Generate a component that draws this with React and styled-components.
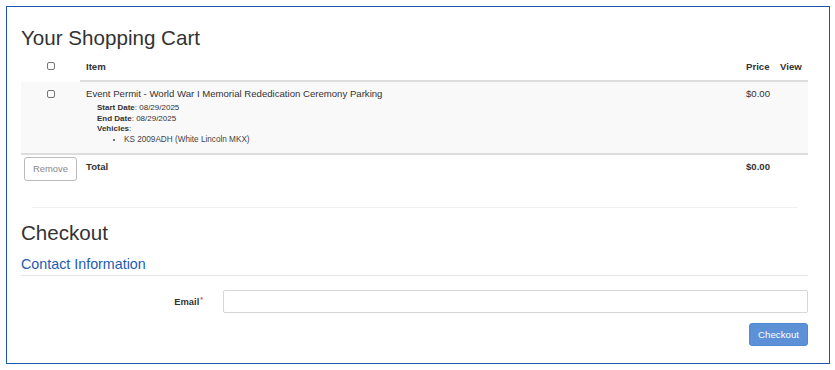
import React from 'react';
import styled, { createGlobalStyle } from 'styled-components';

const GlobalStyle = createGlobalStyle`
    html, body {
        margin: 0;
        padding: 0;
        background: #ffffff;
    }
    body {
        font-family: "Liberation Sans", Arial, sans-serif;
        color: #333333;
    }
`;

const Frame = styled.div`
    box-sizing: border-box;
    width: 824px;
    height: 358px;
    margin: 6px 0 0 6px;
    border: 1px solid #1d56b1;
    padding: 0 21px 0 14px;
    display: flex;
    flex-direction: column;
`;

const Heading = styled.h3`
    margin: ${(props) => props.$top}px 0 0;
    font-size: 20.6px;
    font-weight: 400;
    line-height: 24px;
    color: #333333;
`;

const Table = styled.table`
    width: 100%;
    margin-top: 6px;
    border-collapse: separate;
    border-spacing: 0;
    table-layout: fixed;
    font-size: 9.6px;
    line-height: 12px;
`;

const HeadCell = styled.th`
    padding: 5px 6px 7px;
    text-align: ${(props) => (props.$center ? 'center' : 'left')};
    font-weight: 700;
    color: #333333;
    border-bottom: ${(props) => (props.$noLine ? '2px solid transparent' : '2px solid #dddddd')};
`;

const ItemRow = styled.tr`
    background: #f9f9f9;
`;

const Cell = styled.td`
    padding: ${(props) => props.$pad || '6px 6px 7px'};
    vertical-align: top;
    text-align: ${(props) => (props.$center ? 'center' : 'left')};
    font-weight: ${(props) => (props.$bold ? 700 : 400)};
    border-bottom: ${(props) => (props.$line ? '2px solid #dddddd' : 'none')};
`;

const Check = styled.input.attrs({ type: 'checkbox' })`
    appearance: none;
    box-sizing: border-box;
    width: 8px;
    height: 8px;
    margin: ${(props) => props.$top || 0}px 0 0;
    border: 1px solid #767676;
    border-radius: 2px;
    background: #ffffff;
    vertical-align: top;
`;

const Details = styled.div`
    margin: 3px 0 0 11px;
    font-size: 8px;
    line-height: 10.7px;
`;

const Label = styled.b`
    font-weight: 700;
`;

const VehicleList = styled.ul`
    margin: 0;
    padding: 0 0 0 27px;
    font-size: 8.2px;
    color: #444444;
    list-style: disc;
`;

const RemoveButton = styled.button`
    box-sizing: border-box;
    width: 53px;
    height: 24px;
    padding: 0;
    border: 1px solid #bbbbbb;
    border-radius: 3px;
    background: #ffffff;
    color: #888888;
    font-family: inherit;
    font-size: 9.4px;
`;

const Rule = styled.hr`
    margin: 22px 10px 0 11px;
    border: none;
    border-top: 1px solid #eeeeee;
`;

const SubHeading = styled.h4`
    margin: 10px 0 0;
    padding-bottom: 2px;
    border-bottom: 1px solid #e5e5e5;
    font-size: 14.3px;
    font-weight: 400;
    line-height: 18px;
    color: #1d5bb5;
`;

const FormRow = styled.div`
    display: grid;
    grid-template-columns: 182px 1fr;
    column-gap: 20px;
    align-items: center;
    margin-top: 14px;
`;

const FieldLabel = styled.label`
    text-align: right;
    font-size: 9.4px;
    font-weight: 700;
    color: #333333;
`;

const Required = styled.span`
    color: #d9534f;
    font-size: 7px;
    vertical-align: top;
    margin-left: 1px;
`;

const TextInput = styled.input`
    box-sizing: border-box;
    height: 23px;
    border: 1px solid #d6d6d6;
    border-radius: 2px;
    background: #ffffff;
`;

const Actions = styled.div`
    display: flex;
    justify-content: flex-end;
    margin-top: 10px;
`;

const CheckoutButton = styled.button`
    box-sizing: border-box;
    width: 59px;
    height: 23px;
    padding: 0;
    border: 1px solid #5088d2;
    border-radius: 3px;
    background: #5c90d7;
    color: #ffffff;
    font-family: inherit;
    font-size: 9.7px;
`;

const cart = [
    {
        name: 'Event Permit - World War I Memorial Rededication Ceremony Parking',
        start: '08/29/2025',
        end: '08/29/2025',
        vehicles: ['KS 2009ADH (White Lincoln MKX)'],
        price: '$0.00',
    },
];

export default function App() {
    return (
        <>
            <GlobalStyle />
            <Frame>
                <Heading $top={19}>Your Shopping Cart</Heading>
                <Table>
                    <colgroup>
                        <col style={{ width: 59 }} />
                        <col />
                        <col style={{ width: 34 }} />
                        <col style={{ width: 34 }} />
                    </colgroup>
                    <thead>
                        <tr>
                            <HeadCell $center $noLine><Check $top={1} /></HeadCell>
                            <HeadCell>Item</HeadCell>
                            <HeadCell>Price</HeadCell>
                            <HeadCell>View</HeadCell>
                        </tr>
                    </thead>
                    <tbody>
                        {cart.map((item) => (
                            <ItemRow key={item.name}>
                                <Cell $center $line><Check $top={2} /></Cell>
                                <Cell $line>
                                    {item.name}
                                    <Details>
                                        <div><Label>Start Date</Label>: {item.start}</div>
                                        <div><Label>End Date</Label>: {item.end}</div>
                                        <div><Label>Vehicles</Label>:</div>
                                        <VehicleList>
                                            {item.vehicles.map((v) => <li key={v}>{v}</li>)}
                                        </VehicleList>
                                    </Details>
                                </Cell>
                                <Cell $line>{item.price}</Cell>
                                <Cell $line />
                            </ItemRow>
                        ))}
                        <tr>
                            <Cell $center $pad="2px 0 4px"><RemoveButton>Remove</RemoveButton></Cell>
                            <Cell $bold>Total</Cell>
                            <Cell $bold>$0.00</Cell>
                            <Cell />
                        </tr>
                    </tbody>
                </Table>
                <Rule />
                <Heading $top={13}>Checkout</Heading>
                <SubHeading>Contact Information</SubHeading>
                <FormRow>
                    <FieldLabel>Email<Required>*</Required></FieldLabel>
                    <TextInput type="email" />
                </FormRow>
                <Actions>
                    <CheckoutButton>Checkout</CheckoutButton>
                </Actions>
            </Frame>
        </>
    );
}
